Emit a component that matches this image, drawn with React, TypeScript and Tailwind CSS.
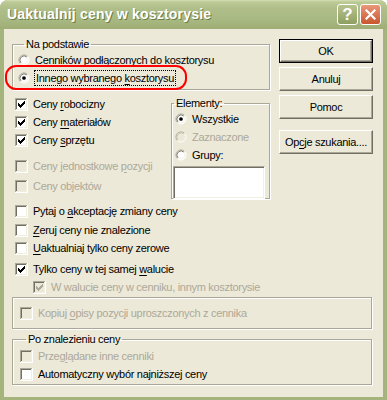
import React from "react";

const FONT = "font-['Liberation_Sans',Arial,sans-serif]";

function Check({ checked = false, disabled = false }: { checked?: boolean; disabled?: boolean }) {
  const mark = disabled ? "#aca899" : "#000";
  const pts: [number, number][] = [
    [6, 0], [5, 1], [6, 1], [0, 2], [4, 2], [5, 2], [6, 2],
    [0, 3], [1, 3], [3, 3], [4, 3], [5, 3], [0, 4], [1, 4], [2, 4], [3, 4], [4, 4],
    [1, 5], [2, 5], [3, 5], [2, 6],
  ];
  return (
    <svg width="13" height="13" viewBox="0 0 13 13" shapeRendering="crispEdges" className="shrink-0">
      <rect x="0" y="0" width="13" height="13" fill="#fff" />
      <rect x="0" y="0" width="12" height="12" fill="#aca899" />
      <rect x="1" y="1" width="11" height="11" fill="#f1efe2" />
      <rect x="1" y="1" width="10" height="10" fill="#716f64" />
      <rect x="2" y="2" width="9" height="9" fill={disabled ? "#ece9d8" : "#fff"} />
      {checked && pts.map(([x, y], i) => <rect key={i} x={3 + x} y={3 + y} width="1" height="1" fill={mark} />)}
    </svg>
  );
}

function Radio({ checked = false, disabled = false }: { checked?: boolean; disabled?: boolean }) {
  return (
    <svg width="12" height="12" viewBox="0 0 13 13" className="shrink-0">
      <circle cx="6.5" cy="6.5" r="5.5" fill={disabled ? "#ece9d8" : "#fff"} />
      <path d="M2.61 10.39 A5.5 5.5 0 0 1 10.39 2.61" stroke="#aca899" strokeWidth="1" fill="none" />
      <path d="M10.39 2.61 A5.5 5.5 0 0 1 2.61 10.39" stroke="#fff" strokeWidth="1" fill="none" />
      <path d="M3.32 9.68 A4.5 4.5 0 0 1 9.68 3.32" stroke={disabled ? "#c9c6b6" : "#716f64"} strokeWidth="1" fill="none" />
      <path d="M9.68 3.32 A4.5 4.5 0 0 1 3.32 9.68" stroke="#f1efe2" strokeWidth="1" fill="none" />
      {checked && <circle cx="6.5" cy="6.5" r="2" fill="#000" />}
    </svg>
  );
}

function Row({
  children,
  control,
  disabled = false,
  className = "",
  gap = "gap-[5px]",
}: {
  children: React.ReactNode;
  control: React.ReactNode;
  disabled?: boolean;
  className?: string;
  gap?: string;
}) {
  return (
    <div className={`flex items-center ${gap} h-[18px] ${className}`}>
      {control}
      <span className={`whitespace-nowrap ${disabled ? "text-[#aca899]" : "text-black"}`}>{children}</span>
    </div>
  );
}

function Btn({ children, primary = false, className = "" }: { children: React.ReactNode; primary?: boolean; className?: string }) {
  return (
    <div className={`w-[94px] h-[24px] ${primary ? "border border-black" : ""} ${className}`}>
      <div className="w-full h-full flex items-center justify-center border border-t-white border-l-white border-r-[#716f64] border-b-[#716f64] shadow-[inset_-1px_-1px_0_#aca899] text-black">
        {children}
      </div>
    </div>
  );
}

const frame = "border border-[#aca899] shadow-[1px_1px_0_#fff,inset_1px_1px_0_#fff]";

export default function App() {
  return (
    <div className={`${FONT} text-[11px] leading-[13px] tracking-[-0.3px] w-[387px] h-[400px] flex flex-col rounded-t-[8px] overflow-hidden bg-[#a4b47c] select-none`}>
      {/* title bar */}
      <div className="h-[29px] shrink-0 flex items-center pl-[7px] pr-[6px] bg-[linear-gradient(#d4ddb4_0px,#bccb96_2px,#b0bf89_8px,#a8b882_20px,#9dad74_29px)]">
        <span className="flex-1 font-bold text-[14px] text-white [text-shadow:1px_1px_0_#6e7e45] tracking-[0.2px]">
          Uaktualnij ceny w kosztorysie
        </span>
        <div className="w-[21px] h-[21px] rounded-[3px] border border-white bg-[linear-gradient(#b7c38d,#8f9f62)] flex items-center justify-center text-white font-bold text-[17px] leading-none tracking-normal">
          ?
        </div>
        <div className="w-[21px] h-[21px] ml-[2px] rounded-[3px] border border-white bg-[linear-gradient(#e9977a,#c9562f)] flex items-center justify-center">
          <svg width="11" height="11" viewBox="0 0 11 11">
            <path d="M1.5 1.5 L9.5 9.5 M9.5 1.5 L1.5 9.5" stroke="#fff" strokeWidth="2.2" strokeLinecap="square" />
          </svg>
        </div>
      </div>

      {/* client */}
      <div className="relative flex-1 mx-[4px] mb-[3px] bg-[#ece9d8] pt-[9px] pl-[8px]">
        <div className="flex">
          <div className="w-[258px]">
            <fieldset className={`${frame} h-[52px] pl-[5px]`}>
              <legend className="ml-[6px] px-[2px] text-black leading-[13px]">Na podstawie</legend>
              <Row control={<Radio />}>
                Cenników podłączonych do kosztorysu
              </Row>
              <Row control={<Radio checked />} gap="gap-[4px]">
                <span className="border border-dotted border-black px-[1px] py-[1px]">
                  Innego wybranego <u className="underline-offset-2">k</u>osztorysu
                </span>
              </Row>
            </fieldset>

            <div className="flex mt-[5px]">
              <div className="w-[159px] pl-[3px]">
                <Row control={<Check checked />}>
                  Ceny <u className="underline-offset-2">r</u>obocizny
                </Row>
                <Row control={<Check checked />}>
                  Ceny <u className="underline-offset-2">m</u>ateriałów
                </Row>
                <Row control={<Check checked />}>
                  Ceny <u className="underline-offset-2">s</u>przętu
                </Row>
                <Row control={<Check disabled />} disabled className="mt-[8px]">
                  Ceny jednostkowe <u className="underline-offset-2">p</u>ozycji
                </Row>
                <Row control={<Check disabled />} disabled className="mt-[2px]">
                  Ceny objektów
                </Row>
              </div>
              <fieldset className={`${frame} w-[99px] h-[102px] mt-[2px]`}>
                <legend className="ml-[2px] px-[2px] text-black leading-[13px]">Elementy:</legend>
                <Row control={<Radio checked />} className="ml-[3px] h-[17px]">
                  Wszystkie
                </Row>
                <Row control={<Radio disabled />} disabled className="ml-[3px] h-[17px]">
                  Zaznaczone
                </Row>
                <Row control={<Radio />} className="ml-[3px] h-[17px]">
                  Grupy:
                </Row>
                <div className="ml-[1px] mt-[2px] w-[92px] h-[33px] bg-white border border-t-[#aca899] border-l-[#aca899] border-r-white border-b-white shadow-[inset_1px_1px_0_#716f64,inset_-1px_-1px_0_#f1efe2]" />
              </fieldset>
            </div>
          </div>

          <div className="ml-[9px] pt-[1px] flex flex-col">
            <Btn primary>OK</Btn>
            <Btn className="mt-[4px]">Anuluj</Btn>
            <Btn className="mt-[4px]">Pomoc</Btn>
            <Btn className="mt-[11px]">
              <span>
                Op<u className="underline-offset-2">c</u>je szukania....
              </span>
            </Btn>
          </div>
        </div>

        <div className="pl-[3px] mt-[3px]">
          <Row control={<Check />}>
            Pytaj o <u className="underline-offset-2">a</u>kceptację zmiany ceny
          </Row>
          <Row control={<Check />} className="mt-[1px]">
            <u className="underline-offset-2">Z</u>eruj ceny nie znalezione
          </Row>
          <Row control={<Check />}>
            <u className="underline-offset-2">U</u>aktualniaj tylko ceny zerowe
          </Row>
          <Row control={<Check checked />} className="mt-[3px]">
            Tylko ceny w tej samej <u className="underline-offset-2">w</u>alucie
          </Row>
          <Row control={<Check checked disabled />} disabled className="pl-[18px] gap-[4px]">
            W walucie ceny w cenniku, innym kosztorysie
          </Row>
        </div>

        <fieldset className={`${frame} w-[360px] h-[32px] mt-[1px] pl-[7px] flex items-center`}>
          <Row control={<Check disabled />} disabled>
            Kopiuj <u className="underline-offset-2">o</u>pisy pozycji uproszczonych z cennika
          </Row>
        </fieldset>

        <fieldset className={`${frame} w-[360px] h-[52px] mt-[4px] pl-[7px]`}>
          <legend className="ml-[6px] px-[2px] text-black leading-[13px]">Po znalezieniu ceny</legend>
          <Row control={<Check disabled />} disabled className="h-[17px] mt-[1px]">
            Przeg<u className="underline-offset-2">l</u>ądane inne cenniki
          </Row>
          <Row control={<Check />} className="h-[17px]">
            Automatyczny wybór najniższej ceny
          </Row>
        </fieldset>

        {/* red annotation around the selected option */}
        <div className="absolute left-[1px] top-[36px] w-[182px] h-[25px] rounded-[11px] border-2 border-[#f00] pointer-events-none" />
      </div>
    </div>
  );
}
